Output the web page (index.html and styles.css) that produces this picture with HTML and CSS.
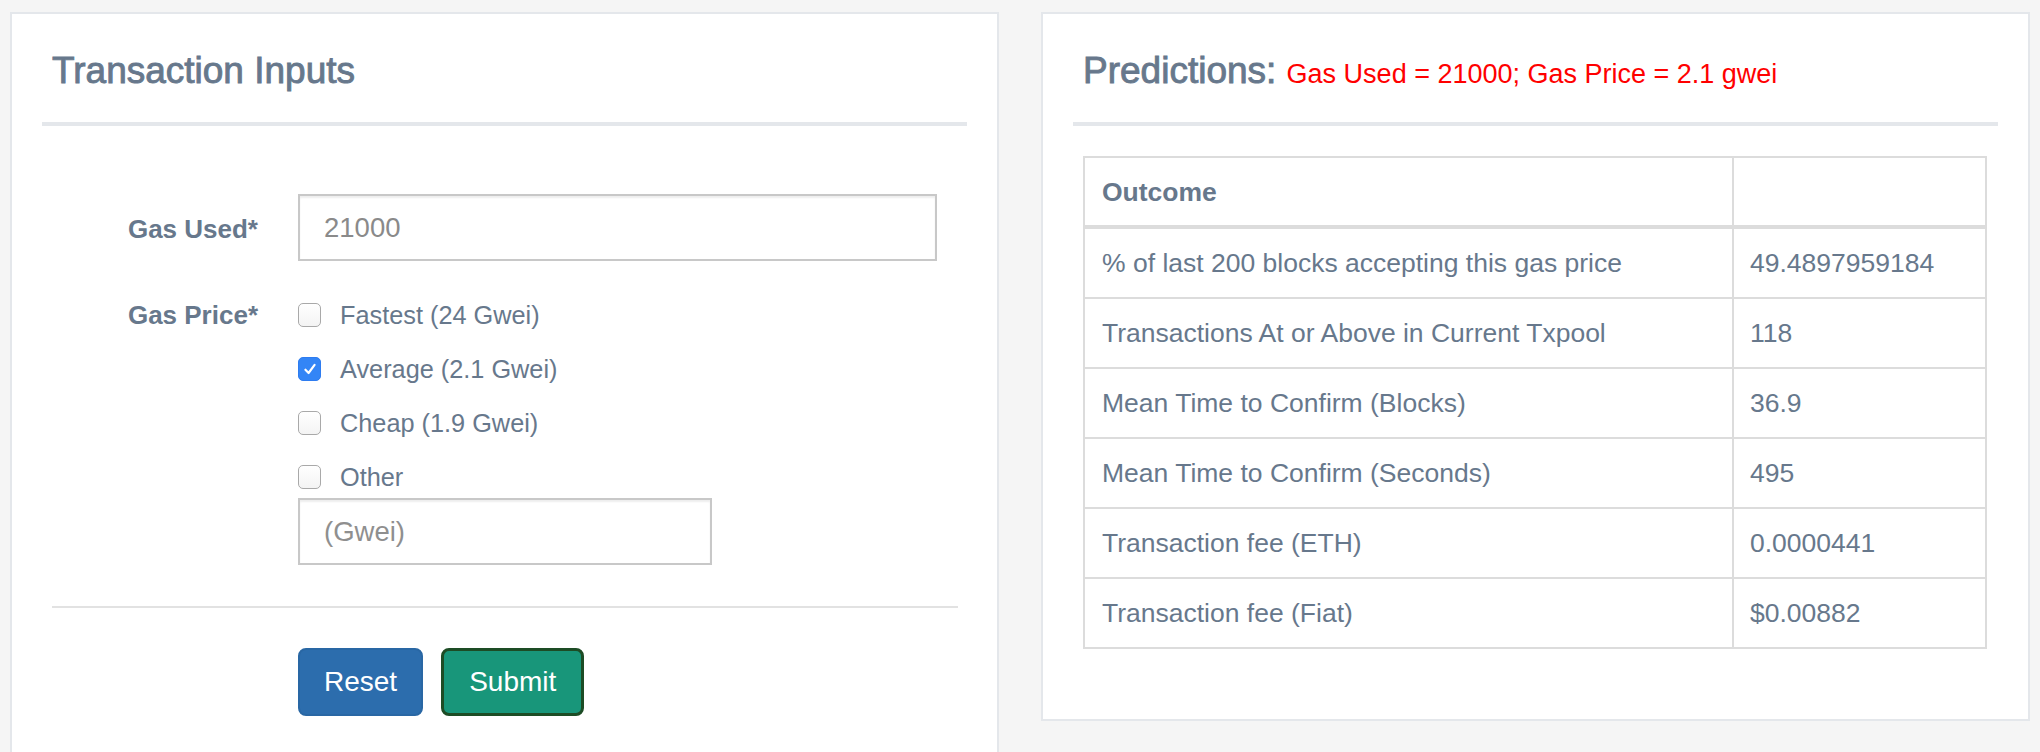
FILE: index.html
```html
<!DOCTYPE html>
<html lang="en">
<head>
<meta charset="utf-8">
<title>Gas Price Predictor</title>
<link rel="stylesheet" href="styles.css">
</head>
<body>
<main class="page">
  <section class="panel panel-inputs">
    <header class="panel-head">
      <h2 class="panel-title">Transaction Inputs</h2>
    </header>
    <form class="tx-form">
      <label class="field-label field-label--input" for="gas-used">Gas Used*</label>
      <div class="field">
        <input id="gas-used" class="text-input text-input--wide" type="text" value="21000">
      </div>

      <div class="field-label field-label--options">Gas Price*</div>
      <div class="field options">
        <label class="option"><span class="box"></span>Fastest (24 Gwei)</label>
        <label class="option"><span class="box box--checked"><svg viewBox="0 0 24 24" width="20" height="20"><path d="M6.5 12.8l3.8 4L17.5 7" fill="none" stroke="#fff" stroke-width="2.6" stroke-linecap="round" stroke-linejoin="round"/></svg></span>Average (2.1 Gwei)</label>
        <label class="option"><span class="box"></span>Cheap (1.9 Gwei)</label>
        <label class="option"><span class="box"></span>Other</label>
        <input class="text-input text-input--short" type="text" placeholder="(Gwei)">
      </div>

      <hr class="form-divider">

      <div class="actions">
        <button type="button" class="btn btn-reset">Reset</button>
        <button type="button" class="btn btn-submit">Submit</button>
      </div>
    </form>
  </section>

  <section class="panel panel-predictions">
    <header class="panel-head">
      <h2 class="panel-title">Predictions: <span class="summary">Gas Used = 21000; Gas Price = 2.1 gwei</span></h2>
    </header>
    <div class="table-wrap">
      <table class="results">
        <thead>
          <tr><th class="col-outcome">Outcome</th><th></th></tr>
        </thead>
        <tbody>
          <tr><td>% of last 200 blocks accepting this gas price</td><td>49.4897959184</td></tr>
          <tr><td>Transactions At or Above in Current Txpool</td><td>118</td></tr>
          <tr><td>Mean Time to Confirm (Blocks)</td><td>36.9</td></tr>
          <tr><td>Mean Time to Confirm (Seconds)</td><td>495</td></tr>
          <tr><td>Transaction fee (ETH)</td><td>0.0000441</td></tr>
          <tr><td>Transaction fee (Fiat)</td><td>$0.00882</td></tr>
        </tbody>
      </table>
    </div>
  </section>
</main>
</body>
</html>
```

FILE: styles.css
```css
html, body {
  margin: 0;
  padding: 0;
}

body {
  background: #f5f5f5;
  font-family: "Liberation Sans", Arial, Helvetica, sans-serif;
  color: #67788c;
  overflow: hidden;
}

.page {
  display: flex;
  align-items: flex-start;
  gap: 42px;
  padding: 12px 10px 0;
}

.panel {
  flex: 1 1 0;
  min-width: 0;
  background: #fff;
  border: 2px solid #e4e7eb;
  padding: 30px 30px 30px;
  box-sizing: border-box;
}

.panel-inputs {
  padding-bottom: 80px;
}

.panel-head {
  padding: 5px 10px 29px;
  border-bottom: 4px solid #e4e7eb;
}

.panel-title {
  margin: 0;
  font-size: 37px;
  line-height: 44px;
  font-weight: 500;
  -webkit-text-stroke: 0.9px #67788c;
  color: #67788c;
  white-space: nowrap;
}

.summary {
  font-size: 27px;
  line-height: 1;
  font-weight: 400;
  color: #ff0000;
  -webkit-text-stroke: 0;
}

/* ---------- form ---------- */

.tx-form {
  display: grid;
  grid-template-columns: 206px 639px;
  column-gap: 40px;
  margin: 68px 10px 0;
}

.field-label {
  font-size: 26px;
  font-weight: 700;
  text-align: right;
  color: #67788c;
}

.field-label--input {
  line-height: 67px;
  padding-top: 2px;
}

.field-label--options {
  line-height: 40px;
  margin-top: 32px;
}

.text-input {
  display: block;
  box-sizing: border-box;
  height: 67px;
  padding: 0 24px;
  border: 2px solid #c8c8c8;
  border-radius: 0;
  box-shadow: inset 0 2px 2px rgba(0, 0, 0, 0.07);
  font-family: "Liberation Sans", Arial, sans-serif;
  font-size: 27.5px;
  color: #8a8a8a;
  background: #fff;
  outline: none;
}

.text-input::placeholder {
  color: #8f8f8f;
}

.text-input--wide {
  width: 639px;
}

.text-input--short {
  width: 414px;
  margin-top: -13px;
}

.options {
  display: flex;
  flex-direction: column;
  gap: 14px;
  margin-top: 32px;
}

.option {
  display: flex;
  align-items: center;
  gap: 19px;
  font-size: 25.3px;
  line-height: 40px;
  color: #67788c;
}

.box {
  flex: none;
  box-sizing: border-box;
  width: 23px;
  height: 24px;
  border: 1.5px solid #a9a9a9;
  border-radius: 5px;
  background: linear-gradient(#ffffff, #f4f4f4);
  display: flex;
  align-items: center;
  justify-content: center;
}

.box--checked {
  border-color: #2e7cf0;
  background: #3385f6;
}

.form-divider {
  grid-column: 1 / -1;
  margin: 41px 0 0;
  width: 906px;
  border: 0;
  border-top: 2px solid #e2e2e2;
  height: 0;
}

.actions {
  grid-column: 2;
  display: flex;
  gap: 18px;
  margin-top: 40px;
}

.btn {
  box-sizing: border-box;
  height: 68px;
  padding: 0 24px;
  border-radius: 8px;
  font-family: "Liberation Sans", Arial, sans-serif;
  font-size: 28px;
  color: #fff;
  cursor: pointer;
}

.btn-reset {
  background: #2c6dad;
  border: 2px solid #2967a4;
}

.btn-submit {
  background: #18967a;
  border: 3px solid #1d4c25;
  padding: 0 25px;
}

/* ---------- results table ---------- */

.table-wrap {
  margin: 30px 11px 40px 10px;
}

.results {
  width: 100%;
  border-collapse: collapse;
  font-size: 26.5px;
  color: #67788c;
}

.results th,
.results td {
  border: 2px solid #dcdcdc;
  padding: 14px 16px 14px 17px;
  line-height: 40px;
  text-align: left;
  vertical-align: top;
}

.results td + td,
.results th + th {
  padding-left: 16px;
}

.results thead th {
  border-bottom-width: 4px;
  font-weight: 700;
  padding-bottom: 13px;
}

.col-outcome {
  width: 614px;
}
```
